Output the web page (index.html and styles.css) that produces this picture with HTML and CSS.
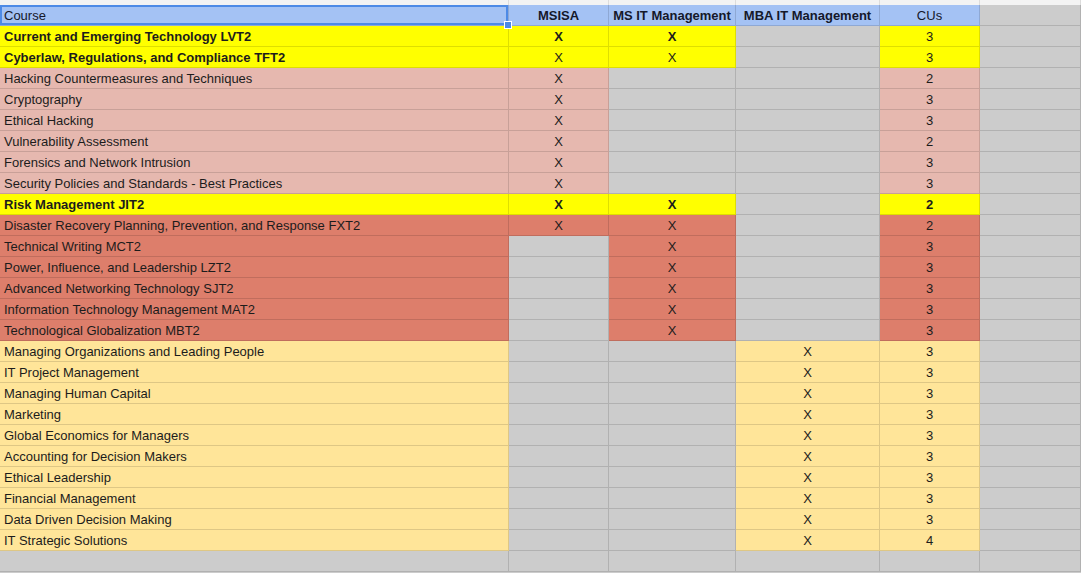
FILE: index.html
```html
<!DOCTYPE html>
<html>
<head>
<meta charset="utf-8">
<link rel="stylesheet" href="styles.css">
</head>
<body>
<div class="topstrip">
  <div class="c"></div><div class="c"></div><div class="c"></div><div class="c"></div><div class="c"></div><div class="c"></div>
</div>
<div class="sheet">
  <div class="c hd left sel">Course<span class="handle"></span></div>
  <div class="c hd b ctr">MSISA</div>
  <div class="c hd b ctr">MS IT Management</div>
  <div class="c hd b ctr">MBA IT Management</div>
  <div class="c hd ctr">CUs</div>
  <div class="c g"></div>

  <div class="c y b left">Current and Emerging Technology LVT2</div>
  <div class="c y b ctr">X</div><div class="c y b ctr">X</div><div class="c g"></div><div class="c y ctr">3</div><div class="c g"></div>

  <div class="c y b left">Cyberlaw, Regulations, and Compliance TFT2</div>
  <div class="c y ctr">X</div><div class="c y ctr">X</div><div class="c g"></div><div class="c y ctr">3</div><div class="c g"></div>

  <div class="c p left">Hacking Countermeasures and Techniques</div>
  <div class="c p ctr">X</div><div class="c g"></div><div class="c g"></div><div class="c p ctr">2</div><div class="c g"></div>

  <div class="c p left">Cryptography</div>
  <div class="c p ctr">X</div><div class="c g"></div><div class="c g"></div><div class="c p ctr">3</div><div class="c g"></div>

  <div class="c p left">Ethical Hacking</div>
  <div class="c p ctr">X</div><div class="c g"></div><div class="c g"></div><div class="c p ctr">3</div><div class="c g"></div>

  <div class="c p left">Vulnerability Assessment</div>
  <div class="c p ctr">X</div><div class="c g"></div><div class="c g"></div><div class="c p ctr">2</div><div class="c g"></div>

  <div class="c p left">Forensics and Network Intrusion</div>
  <div class="c p ctr">X</div><div class="c g"></div><div class="c g"></div><div class="c p ctr">3</div><div class="c g"></div>

  <div class="c p left">Security Policies and Standards - Best Practices</div>
  <div class="c p ctr">X</div><div class="c g"></div><div class="c g"></div><div class="c p ctr">3</div><div class="c g"></div>

  <div class="c y b left">Risk Management JIT2</div>
  <div class="c y b ctr">X</div><div class="c y b ctr">X</div><div class="c g"></div><div class="c y b ctr">2</div><div class="c g"></div>

  <div class="c r left">Disaster Recovery Planning, Prevention, and Response FXT2</div>
  <div class="c r ctr">X</div><div class="c r ctr">X</div><div class="c g"></div><div class="c r ctr">2</div><div class="c g"></div>

  <div class="c r left">Technical Writing MCT2</div>
  <div class="c g"></div><div class="c r ctr">X</div><div class="c g"></div><div class="c r ctr">3</div><div class="c g"></div>

  <div class="c r left">Power, Influence, and Leadership LZT2</div>
  <div class="c g"></div><div class="c r ctr">X</div><div class="c g"></div><div class="c r ctr">3</div><div class="c g"></div>

  <div class="c r left">Advanced Networking Technology SJT2</div>
  <div class="c g"></div><div class="c r ctr">X</div><div class="c g"></div><div class="c r ctr">3</div><div class="c g"></div>

  <div class="c r left">Information Technology Management MAT2</div>
  <div class="c g"></div><div class="c r ctr">X</div><div class="c g"></div><div class="c r ctr">3</div><div class="c g"></div>

  <div class="c r left">Technological Globalization MBT2</div>
  <div class="c g"></div><div class="c r ctr">X</div><div class="c g"></div><div class="c r ctr">3</div><div class="c g"></div>

  <div class="c ly left">Managing Organizations and Leading People</div>
  <div class="c g"></div><div class="c g"></div><div class="c ly ctr">X</div><div class="c ly ctr">3</div><div class="c g"></div>

  <div class="c ly left">IT Project Management</div>
  <div class="c g"></div><div class="c g"></div><div class="c ly ctr">X</div><div class="c ly ctr">3</div><div class="c g"></div>

  <div class="c ly left">Managing Human Capital</div>
  <div class="c g"></div><div class="c g"></div><div class="c ly ctr">X</div><div class="c ly ctr">3</div><div class="c g"></div>

  <div class="c ly left">Marketing</div>
  <div class="c g"></div><div class="c g"></div><div class="c ly ctr">X</div><div class="c ly ctr">3</div><div class="c g"></div>

  <div class="c ly left">Global Economics for Managers</div>
  <div class="c g"></div><div class="c g"></div><div class="c ly ctr">X</div><div class="c ly ctr">3</div><div class="c g"></div>

  <div class="c ly left">Accounting for Decision Makers</div>
  <div class="c g"></div><div class="c g"></div><div class="c ly ctr">X</div><div class="c ly ctr">3</div><div class="c g"></div>

  <div class="c ly left">Ethical Leadership</div>
  <div class="c g"></div><div class="c g"></div><div class="c ly ctr">X</div><div class="c ly ctr">3</div><div class="c g"></div>

  <div class="c ly left">Financial Management</div>
  <div class="c g"></div><div class="c g"></div><div class="c ly ctr">X</div><div class="c ly ctr">3</div><div class="c g"></div>

  <div class="c ly left">Data Driven Decision Making</div>
  <div class="c g"></div><div class="c g"></div><div class="c ly ctr">X</div><div class="c ly ctr">3</div><div class="c g"></div>

  <div class="c ly left">IT Strategic Solutions</div>
  <div class="c g"></div><div class="c g"></div><div class="c ly ctr">X</div><div class="c ly ctr">4</div><div class="c g"></div>

  <div class="c g"></div><div class="c g"></div><div class="c g"></div><div class="c g"></div><div class="c g"></div><div class="c g"></div>
</div>
</body>
</html>
```

FILE: styles.css
```css
html, body {
  margin: 0;
  padding: 0;
  background: #cccccc;
  overflow: hidden;
}

body {
  font-family: "Liberation Sans", Arial, sans-serif;
  font-size: 13px;
  color: #1c1c1c;
  width: 1081px;
  height: 573px;
}

.topstrip {
  display: grid;
  grid-template-columns: 509px 100px 127px 144px 100px 1fr;
  height: 5px;
  background: #f3f3f3;
}

.topstrip .c {
  border-right: 1px solid #dcdcdc;
  border-bottom: none;
}

.sheet {
  display: grid;
  grid-template-columns: 509px 100px 127px 144px 100px 1fr;
  grid-auto-rows: 21px;
}

.c {
  box-sizing: border-box;
  border-right: 1px solid rgba(0, 0, 0, 0.13);
  border-bottom: 1px solid rgba(0, 0, 0, 0.13);
  line-height: 22px;
  white-space: nowrap;
  overflow: hidden;
  position: relative;
}

.left {
  padding-left: 4px;
}

.ctr {
  text-align: center;
}

.b {
  font-weight: bold;
}

.hd {
  background: #a4c2f4;
  color: #15182a;
}

.g {
  background: #cccccc;
}

.y {
  background: #ffff00;
}

.p {
  background: #e6b8af;
}

.r {
  background: #dd7e6b;
}

.ly {
  background: #ffe599;
}

.sel {
  overflow: visible;
  box-shadow: inset 0 0 0 2px #4d8ae6;
  padding-left: 4px;
}

.handle {
  position: absolute;
  right: -4px;
  bottom: -4px;
  width: 6px;
  height: 6px;
  background: #4d8ae6;
  border: 1px solid #ffffff;
  z-index: 2;
}
```
